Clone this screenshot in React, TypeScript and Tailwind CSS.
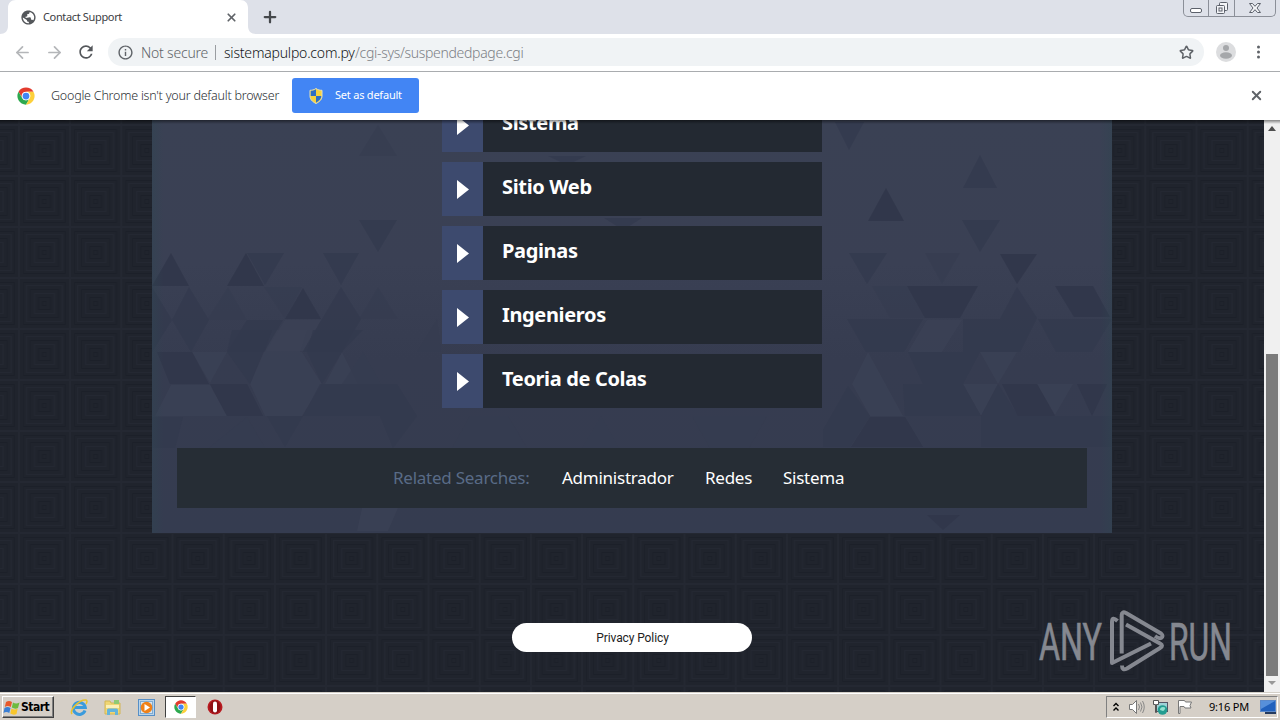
import React from 'react';
import { ArrowLeft, ArrowRight, X, Plus, Star } from 'lucide-react';
import { MdRefresh, MdPublic, MdOutlineInfo } from 'react-icons/md';

const LINKS = ['Sistema', 'Sitio Web', 'Paginas', 'Ingenieros', 'Teoria de Colas'];

const DARK = [
    '0,166 19,133 37,166',
    '75,166 94,133 112,166',
    '133,199 151,168 169,199',
    '5,232 40,232 57,264 18,264',
    '58,264 95,264 111,296 75,296',
    '716,101 734,68 752,101',
    '848,134 885,134 865,164',
    '755,166 826,166 808,198 773,198',
    '903,166 941,166 958,197 922,197',
    '850,264 885,264 903,296 866,296',
    '925,264 955,264 940,296',
    '718,297 753,297 771,327 699,327',
    '775,395 808,395 791,410',
];

const MID = [
    '95,133 132,133 113,165',
    '171,133 207,133 189,165',
    '207,100 245,100 226,132',
    '37,167 57,200 39,232 20,200',
    '0,167 20,200 0,232',
    '189,167 209,199 190,232 151,232 170,199',
    '95,200 131,200 112,232 75,232',
    '80,210 120,210 98,264 75,232',
    '161,210 211,210 190,232 170,264 155,232',
    '168,264 245,264 265,296 241,328 228,296 151,296',
    '115,296 151,296 133,327',
    '0,297 31,297 23,328 0,328',
    '683,2 712,2 697,30',
    '811,68 828,35 845,68',
    '810,100 848,100 828,132',
    '697,133 735,133 715,164',
    '865,167 885,198 868,232 811,232 811,199 848,199',
    '695,199 771,199 752,232 714,232',
    '756,232 828,232 811,264 771,264',
    '696,266 718,296 698,327 671,327 671,310',
    '396,36 434,36 415,45',
    '452,98 490,98 471,110',
    '886,199 960,199 940,232 904,232',
    '751,264 811,264 829,296 753,296',
    '829,296 846,264 866,296 960,296 960,327 829,327',
];

const FAINT = [
    '207,36 226,5 245,36',
    '55,200 76,167 95,200',
    '112,167 150,167 133,199',
    '207,199 226,167 246,199',
    '773,133 808,133 790,164',
    '265,232 285,199 289,232',
    '720,166 755,166 773,198 738,198',
    '57,328 95,297 113,328',
    '190,264 211,232 229,264',
    '300,328 318,296 356,296 375,328',
    '430,328 449,296 467,328',
    '540,296 615,296 597,328 558,328',
];

const LIGHT = [
    '19,265 58,265 75,296 3,296',
    '173,264 190,232 206,264',
    '120,210 155,210 148,232 113,232',
    '40,232 75,232 58,263',
    '112,232 150,232 170,264 150,296 113,296 98,264',
    '133,200 169,200 151,231 114,231',
    '775,200 810,200 790,232 756,232',
    '716,232 751,296 718,296 700,264',
    '828,232 865,232 846,264',
    '811,264 846,264 829,296',
    '885,264 921,264 903,295',
    '210,388 246,388 236,411 205,411',
];

const Triangles: React.FC = () => (
    <svg className="absolute inset-0" width="960" height="413" viewBox="0 0 960 413">
        <defs>
            <linearGradient id="panel" x1="0" y1="0" x2="0" y2="1">
                <stop offset="0" stopColor="#3a4154" />
                <stop offset="0.35" stopColor="#3a4054" />
                <stop offset="0.58" stopColor="#363c50" />
                <stop offset="1" stopColor="#353c50" />
            </linearGradient>
            <linearGradient id="edge">
                <stop offset="0" stopColor="#2f4550" stopOpacity="0.45" />
                <stop offset="0.012" stopColor="#2f4550" stopOpacity="0" />
                <stop offset="0.988" stopColor="#2f4550" stopOpacity="0" />
                <stop offset="1" stopColor="#2f4550" stopOpacity="0.45" />
            </linearGradient>
        </defs>
        <rect width="960" height="413" fill="url(#panel)" />
        {LIGHT.map(p => <polygon key={p} points={p} fill="#3c4256" fillOpacity="0.65" />)}
        {FAINT.map(p => <polygon key={p} points={p} fill="#363c50" fillOpacity="0.6" />)}
        {MID.map(p => <polygon key={p} points={p} fill="#33394d" fillOpacity="0.75" />)}
        {DARK.map(p => <polygon key={p} points={p} fill="#30364a" fillOpacity="0.85" />)}
        <rect width="960" height="413" fill="url(#edge)" />
    </svg>
);

// nested squares, one tile is 51.2px wide
const PageBackdrop: React.FC = () => (
    <svg className="absolute inset-0" width="1264" height="572">
        <defs>
            <pattern id="squares" width="51.2" height="51" patternUnits="userSpaceOnUse" x="18.9" y="5">
                <rect width="51.2" height="51" fill="#20242d" />
                <g fill="none" stroke="#242832">
                    <rect x="0" y="0" width="51.2" height="51" strokeWidth="2" />
                    <rect x="7.5" y="7.5" width="36" height="36" />
                    <rect x="15.5" y="15.5" width="20" height="20" />
                </g>
                <g fill="none" stroke="#1c2029">
                    <rect x="4.5" y="4.5" width="42" height="42" />
                    <rect x="11.5" y="11.5" width="28" height="28" />
                    <rect x="19.5" y="19.5" width="12" height="12" />
                    <rect x="23.5" y="23.5" width="4" height="4" />
                </g>
            </pattern>
        </defs>
        <rect width="1264" height="572" fill="url(#squares)" />
    </svg>
);

const ChromeLogo: React.FC<{ size: number }> = ({ size }) => (
    <svg width={size} height={size} viewBox="0 0 48 48">
        <circle cx="24" cy="24" r="23" fill="#fff" />
        <path d="M4.1 12.5A23 23 0 0 1 43.9 12.5H24A11.5 11.5 0 0 0 14 29.8Z" fill="#e33b2e" />
        <path d="M4.1 12.5A23 23 0 0 0 24 47L34 29.8A11.5 11.5 0 0 1 14 29.8Z" fill="#2da94f" />
        <path d="M43.9 12.5A23 23 0 0 1 24 47L34 29.8A11.5 11.5 0 0 0 24 12.5Z" fill="#fdd03b" />
        <circle cx="24" cy="24" r="11" fill="#fff" />
        <circle cx="24" cy="24" r="9" fill="#4285f4" />
    </svg>
);

const Shield: React.FC = () => (
    <svg width="14" height="16" viewBox="0 0 14 16">
        <path d="M7 .5C5 2 3 2.300 1 2.300V8c0 3.500 2.500 5.800 6 7.500 3.500-1.700 6-4 6-7.500V2.300C11 2.300 9 2 7 .5Z" fill="#f7d23e" stroke="#e8e3b4" />
        <path d="M7 1.200C5 2.500 3.500 2.800 1.700 2.800V8H7ZM7 8h5.300c0 3-2.300 5-5.300 6.700Z" fill="#2f6fc4" />
    </svg>
);

const TabStrip: React.FC = () => (
    <div className="relative flex h-[34px] shrink-0 bg-[#dee1e9]">
        <svg className="absolute left-0 top-0" width="256" height="34">
            <path d="M0 34c5 0 8-3 8-8V8c0-5 3-8 8-8h224c5 0 8 3 8 8v18c0 5 3 8 8 8Z" fill="#fff" />
        </svg>
        <div className="relative flex h-[34px] w-[248px] items-center pl-5">
            <MdPublic size={17} color="#54575b" className="-rotate-12" />
            <span className="ml-[6px] whitespace-nowrap font-['Noto_Sans'] text-[11px] tracking-[-0.35px] text-[#3c4043]">Contact Support</span>
            <X size={13} strokeWidth={3.2} className="ml-auto mr-[10px] text-[#5f6368]" />
        </div>
        <Plus size={18} strokeWidth={3} className="relative ml-[13px] mt-[8px] text-[#45484c]" />
        <div className="ml-auto mr-1 flex h-[17px] w-[93px] rounded-b-[5px] border border-t-0 border-[#8b8f98] text-[#555a63]">
            <div className="w-[25px] border-r border-[#8b8f98] pt-[8px] pl-[6px]">
                <div className="h-[5px] w-[12px] rounded-[2px] border border-[#5c616b] bg-white" />
            </div>
            <div className="flex w-[26px] justify-center border-r border-[#8b8f98]">
                <svg width="14" height="15" viewBox="0 0 14 15" fill="#f4f5f8" stroke="#5c616b">
                    <rect x="4.500" y="2.500" width="8" height="8" rx="1" />
                    <rect x="1.500" y="5.500" width="8" height="8" rx="1" />
                    <rect x="4" y="8" width="3" height="3" />
                </svg>
            </div>
            <div className="flex flex-1 justify-center">
                <svg width="14" height="15" viewBox="0 0 14 15">
                    <path d="M1.500 3.500h3L7 6.300l2.500-2.800h3L9 8l3.500 4.500h-3L7 9.700l-2.500 2.800h-3L5 8Z" fill="#f4f5f8" stroke="#5c616b" />
                </svg>
            </div>
        </div>
    </div>
);

const Toolbar: React.FC = () => (
    <div className="flex h-[38px] shrink-0 items-center border-b border-[#a9acaf] bg-white pb-px">
        <ArrowLeft size={19} strokeWidth={2.2} className="ml-[13px] text-[#b4b6b9]" />
        <ArrowRight size={19} strokeWidth={2.2} className="ml-[13px] text-[#b4b6b9]" />
        <MdRefresh size={20} color="#54575b" className="ml-[12px]" />
        <div className="ml-[12px] flex h-[28px] w-[1096px] items-center rounded-full bg-[#f0f3f5] pl-[9px] pr-[10px] font-['Noto_Sans'] text-[14px]">
            <MdOutlineInfo size={17} color="#5f6368" />
            <span className="ml-[7px] w-[67px] whitespace-nowrap font-light tracking-[-0.2px] text-[#5f6368]">Not secure</span>
            <span className="ml-[7px] h-[15px] w-px bg-[#9a9da1]" />
            <span className="ml-[8px] w-[131px] whitespace-nowrap font-light tracking-[-0.2px] text-[#111316]">sistemapulpo.com.py</span>
            <span className="whitespace-nowrap font-light tracking-[-0.31px] text-[#7c8085]">/cgi-sys/suspendedpage.cgi</span>
            <Star size={15} strokeWidth={2.4} className="ml-auto text-[#5f6368]" />
        </div>
        <svg className="ml-[12px]" width="20" height="20" viewBox="0 0 20 20">
            <circle cx="10" cy="10" r="10" fill="#dcdddf" />
            <circle cx="10" cy="6" r="3" fill="#a5a7aa" />
            <ellipse cx="10" cy="13.500" rx="6" ry="3.300" fill="#a5a7aa" />
        </svg>
        <svg className="ml-[20px]" width="5" height="16" viewBox="0 0 5 16" fill="#5f6368">
            <circle cx="2.500" cy="3" r="1.500" />
            <circle cx="2.500" cy="8" r="1.500" />
            <circle cx="2.500" cy="13" r="1.500" />
        </svg>
    </div>
);

const InfoBar: React.FC = () => (
    <div className="flex h-[48px] shrink-0 items-center bg-white pb-px pl-[17px] pr-[16px] font-['Noto_Sans']">
        <ChromeLogo size={18} />
        <span className="ml-[16px] w-[241px] whitespace-nowrap pt-px text-[12.5px] font-light tracking-[-0.22px] text-[#2c3033]">Google Chrome isn't your default browser</span>
        <button className="flex h-[35px] w-[127px] items-center rounded-[3px] bg-[#4285f4] pl-[17px] text-white">
            <Shield />
            <span className="ml-[12px] whitespace-nowrap text-[11px] tracking-[-0.22px]">Set as default</span>
        </button>
        <X size={15} strokeWidth={3} className="ml-auto text-[#5f6368]" />
    </div>
);

const Watermark: React.FC = () => (
    <svg className="absolute left-[1036px] top-[486px]" width="204" height="70" viewBox="0 0 204 70">
        <g fill="#858890" stroke="#858890" strokeWidth="0.7" fontFamily="Roboto, sans-serif" fontSize="51">
            <text x="3" y="53.500" textLength="63" lengthAdjust="spacingAndGlyphs">ANY</text>
            <text x="133" y="53.500" textLength="63" lengthAdjust="spacingAndGlyphs">RUN</text>
        </g>
        <g fill="none" stroke="#858890" strokeWidth="4" strokeLinejoin="round">
            <path d="M85.700 47.500V9Q86 5 90 7L125 27.500Q128 30 125 32 123 33 119 30" />
            <path d="M81.500 15Q76 10 76 16V57L115 37.500" />
            <path d="M90 18.500 124 37.500Q128 39.700 124 42L91 62.500Q86 65 86 59.500" />
        </g>
    </svg>
);

const Scrollbar: React.FC = () => (
    <div className="relative ml-auto flex w-[16px] flex-col items-center bg-[#f0f0f0]">
        <svg width="16" height="17"><path d="M8 6l4 5H4Z" fill="#4e4e4e" /></svg>
        <div className="mt-[217px] h-[322px] w-[12px] bg-[#7b7b7b]" />
        <svg width="16" height="16"><path d="M4 5h8l-4 4Z" fill="#999" /></svg>
    </div>
);

const Page: React.FC = () => (
    <div className="relative flex h-[572px] shrink-0 overflow-hidden bg-[#20242d]">
        <PageBackdrop />
        <div className="relative flex w-[1264px] flex-col items-center font-['Noto_Sans']">
            <div className="relative h-[413px] w-[960px] overflow-hidden">
                <Triangles />
                <div className="relative mx-auto -mt-[22px] flex w-[380px] flex-col gap-[10px]">
                    {LINKS.map(link => (
                        <div key={link} className="flex h-[54px] bg-[#232932]">
                            <div className="flex w-[41px] items-center justify-center bg-[#3d4a6e]">
                                <svg width="12" height="19" viewBox="0 0 12 19"><path d="M0 0l12 9.500L0 19Z" fill="#fff" /></svg>
                            </div>
                            <span className="pl-[19px] text-[20px] font-bold leading-[50px] tracking-[-0.35px] text-white">{link}</span>
                        </div>
                    ))}
                </div>
                <div className="relative mx-[25px] mt-[40px] flex h-[60px] items-center bg-[#262d35] pl-[216px] text-[17px] tracking-[-0.25px] text-white">
                    <span className="w-[169px] text-[#596b87]">Related Searches:</span>
                    <span className="w-[143px]">Administrador</span>
                    <span className="w-[78px]">Redes</span>
                    <span>Sistema</span>
                </div>
            </div>
            <button className="mt-[90px] h-[29px] w-[240px] rounded-full bg-white pl-px font-[Roboto] text-[12px] tracking-[-0.1px] text-[#222]">Privacy Policy</button>
        </div>
        <Scrollbar />
        <Watermark />
        <div className="absolute inset-x-0 top-0 h-[4px] bg-gradient-to-b from-black/45 to-transparent" />
    </div>
);

const Taskbar: React.FC = () => (
    <div className="flex h-[28px] shrink-0 items-center border-t border-[#d4d0c8] bg-[#d5cfc7] pt-px shadow-[inset_0_1px_0_#fff]">
        <div className="ml-[2px] flex h-[22px] w-[52px] items-center border border-b-[#404040] border-l-white border-r-[#404040] border-t-white shadow-[inset_-1px_-1px_0_#808080]">
            <svg width="18" height="17" viewBox="0 0 18 17" className="shrink-0">
                <path d="M3 3q3-2 6 0L7.800 8q-3-2-6 0Z" fill="#e8592b" />
                <path d="M10 3.500q3 2 6.500 0L15 9q-3 1.500-6.200-.5Z" fill="#6ebb3d" />
                <path d="M1.500 9q3-2 6 0L6.300 14q-3-2-5.800 0Z" fill="#3b7fd4" />
                <path d="M8.500 9.500q3 2 6.200 0L13.500 15q-3 1.500-6.200-.5Z" fill="#f8c62c" />
            </svg>
            <span className="font-['DejaVu_Sans_Condensed','DejaVu_Sans'] text-[12px] font-bold tracking-[-0.5px] text-black">Start</span>
        </div>
        <svg className="ml-[16px]" width="18" height="18" viewBox="0 0 18 18" fill="none">
            <path d="M15 12.500A6 6 0 1 1 15.300 9.500H5" stroke="#3b9bdc" strokeWidth="3" />
            <path d="M2 16C-1 12 10 1 16 2c1.500.5 1 2.500 0 4" stroke="#e8c22e" strokeWidth="1.500" />
        </svg>
        <svg className="ml-[16px]" width="18" height="18" viewBox="0 0 18 18">
            <path d="M1 3h5l1 2h9v11H1Z" fill="#efd675" stroke="#d3b654" />
            <path d="M10 2h5v4h-5Z" fill="#8fca74" />
            <path d="M2 7h13v3H2Z" fill="#fbf0b7" />
            <path d="M3 17v-5q0-1.500 1.500-1.500h8q1.500 0 1.500 1.500v5h-3v-3H6v3Z" fill="#64b4dc" />
        </svg>
        <svg className="ml-[16px]" width="17" height="17" viewBox="0 0 17 17">
            <rect x=".5" y=".5" width="16" height="16" fill="#bad4e9" stroke="#568fc7" />
            <rect x="2.500" y="2.500" width="12" height="12" fill="#d6e5ef" stroke="#7fabd2" />
            <circle cx="8.500" cy="8.500" r="5.800" fill="#f08118" />
            <path d="M6.500 5v7l5.500-3.500Z" fill="#fff" />
        </svg>
        <div className="ml-[10px] flex h-[22px] w-[31px] items-center justify-center border border-b-white border-l-[#404040] border-r-white border-t-[#404040] bg-white">
            <ChromeLogo size={14} />
        </div>
        <svg className="ml-[11px]" width="16" height="16" viewBox="0 0 16 16">
            <circle cx="8" cy="8" r="7.500" fill="#b81b20" />
            <ellipse cx="8" cy="8" rx="5.500" ry="6.500" fill="#8e1115" />
            <rect x="6" y="2.500" width="4" height="11" rx="2" fill="#fff" />
        </svg>
        <div className="ml-auto mr-[2px] flex h-[22px] w-[172px] items-center border border-b-white border-l-[#808080] border-r-white border-t-[#808080]">
            <svg className="ml-[5px]" width="8" height="12" viewBox="0 0 8 12" fill="none" stroke="#000" strokeWidth="1.400">
                <path d="M1.500 5 4 2.500 6.500 5M1.500 9.500 4 7l2.500 2.500" />
            </svg>
            <svg className="ml-[8px]" width="17" height="16" viewBox="0 0 17 16">
                <path d="M1.500 5.500h3l4-4v13l-4-4h-3Z" fill="#fff" stroke="#777" />
                <path d="M10.500 5q2 3 0 6M12.500 3.500q3 4.500 0 9M14.500 2q3.500 6 0 12" fill="none" stroke="#888" />
            </svg>
            <svg className="ml-[7px]" width="17" height="17" viewBox="0 0 17 17">
                <rect x="4.500" y="3.500" width="11" height="9" fill="#9ed3d7" stroke="#556" />
                <path d="M1.500 1.500h5v4h-2v8h-1v-8h-2Z" fill="#fff" stroke="#555" />
                <circle cx="10.500" cy="11" r="4.800" fill="#239d91" />
                <path d="M8 11q0-3 3-3t2 2-2 2Z" fill="#93e0cf" />
            </svg>
            <svg className="ml-[7px]" width="17" height="16" viewBox="0 0 17 16">
                <path d="M2.500 1.500h6l1 1.500h6l-1.500 3.500 1 2.500h-6l-1-1.500H4v7H2.500Z" fill="#fff" stroke="#777" />
            </svg>
            <span className="ml-[16px] w-[40px] whitespace-nowrap font-['Noto_Sans'] text-[11px] tracking-[-0.2px] text-black">9:16 PM</span>
            <svg className="ml-auto mr-px" width="16" height="14" viewBox="0 0 16 14">
                <rect x=".5" y=".5" width="15" height="11" fill="#2161bd" stroke="#5b89c9" />
                <path d="M1 1h14L1 9Z" fill="#5790da" />
                <path d="M5 13h11" stroke="#243a5e" strokeWidth="2" />
            </svg>
        </div>
    </div>
);

const App: React.FC = () => (
    <div className="flex h-[720px] w-[1280px] flex-col overflow-hidden bg-white">
        <TabStrip />
        <Toolbar />
        <InfoBar />
        <Page />
        <Taskbar />
    </div>
);

export default App;
